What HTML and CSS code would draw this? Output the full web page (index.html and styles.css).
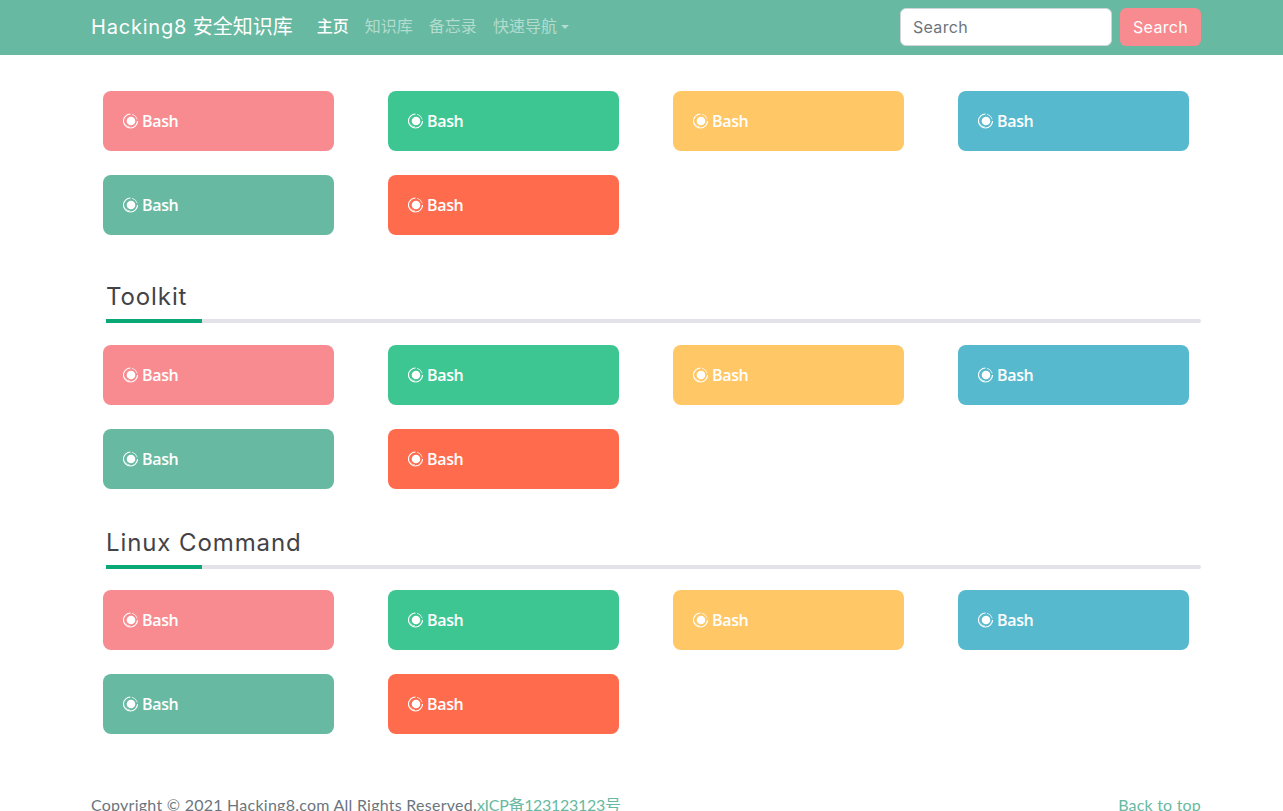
FILE: index.html
```html
<!DOCTYPE html>
<html lang="zh">
<head>
<meta charset="utf-8">
<title>Hacking8 安全知识库</title>
<link rel="stylesheet" href="styles.css">
</head>
<body>
<svg class="sprite" width="0" height="0" aria-hidden="true">
  <symbol id="ring" viewBox="0 0 15 16">
    <path d="M7.5 1a7 7 0 1 0 7 7" fill="none" stroke="currentColor" stroke-width="1.1"/>
    <path d="M14.2 6.4A7 7 0 0 0 9 1.2" fill="none" stroke="currentColor" stroke-width=".7"/>
    <path d="M2.6 11.4A6 6 0 0 0 7 14" fill="none" stroke="currentColor" stroke-width=".6"/>
    <circle cx="8" cy="8" r="4.3" fill="currentColor"/>
  </symbol>
</svg>
<nav class="navbar">
  <div class="nav-inner">
    <a class="brand" href="#"><span class="brand-latin">Hacking8</span> 安全知识库</a>
    <ul class="nav-links">
      <li><a class="nav-link active" href="#">主页</a></li>
      <li><a class="nav-link" href="#">知识库</a></li>
      <li><a class="nav-link" href="#">备忘录</a></li>
      <li><a class="nav-link caret" href="#">快速导航</a></li>
    </ul>
    <form class="search">
      <input class="search-input" type="text" placeholder="Search">
      <button class="search-btn" type="button">Search</button>
    </form>
  </div>
</nav>
<main class="container">
  <section class="cards first">
    <a class="card pink" href="#"><svg class="icon"><use href="#ring"/></svg>Bash</a>
    <a class="card green" href="#"><svg class="icon"><use href="#ring"/></svg>Bash</a>
    <a class="card yellow" href="#"><svg class="icon"><use href="#ring"/></svg>Bash</a>
    <a class="card blue" href="#"><svg class="icon"><use href="#ring"/></svg>Bash</a>
    <a class="card teal" href="#"><svg class="icon"><use href="#ring"/></svg>Bash</a>
    <a class="card orange" href="#"><svg class="icon"><use href="#ring"/></svg>Bash</a>
  </section>
  <header class="section-head toolkit">
    <h2 class="section-title">Toolkit</h2>
    <div class="track"><div class="fill"></div></div>
  </header>
  <section class="cards">
    <a class="card pink" href="#"><svg class="icon"><use href="#ring"/></svg>Bash</a>
    <a class="card green" href="#"><svg class="icon"><use href="#ring"/></svg>Bash</a>
    <a class="card yellow" href="#"><svg class="icon"><use href="#ring"/></svg>Bash</a>
    <a class="card blue" href="#"><svg class="icon"><use href="#ring"/></svg>Bash</a>
    <a class="card teal" href="#"><svg class="icon"><use href="#ring"/></svg>Bash</a>
    <a class="card orange" href="#"><svg class="icon"><use href="#ring"/></svg>Bash</a>
  </section>
  <header class="section-head linux">
    <h2 class="section-title">Linux Command</h2>
    <div class="track"><div class="fill"></div></div>
  </header>
  <section class="cards">
    <a class="card pink" href="#"><svg class="icon"><use href="#ring"/></svg>Bash</a>
    <a class="card green" href="#"><svg class="icon"><use href="#ring"/></svg>Bash</a>
    <a class="card yellow" href="#"><svg class="icon"><use href="#ring"/></svg>Bash</a>
    <a class="card blue" href="#"><svg class="icon"><use href="#ring"/></svg>Bash</a>
    <a class="card teal" href="#"><svg class="icon"><use href="#ring"/></svg>Bash</a>
    <a class="card orange" href="#"><svg class="icon"><use href="#ring"/></svg>Bash</a>
  </section>
  <footer class="footer">
    <p class="copy">Copyright © 2021 Hacking8.com All Rights Reserved.<a class="icp" href="#">xICP备123123123号</a></p>
    <a class="top" href="#">Back to top</a>
  </footer>
</main>
</body>
</html>
```
FILE: styles.css
```css
* { box-sizing: border-box; }
html, body { height: 811px; overflow: hidden; }
body {
  margin: 0;
  background: #fff;
  color: #6c757d;
  font: 16px/24px "Lato", "Noto Sans CJK SC", sans-serif;
}
a { text-decoration: none; }
.sprite { display: block; position: absolute; }

.navbar { height: 55px; background: #67b9a1; }
.nav-inner {
  width: 1110px;
  height: 55px;
  margin-left: 91px;
  display: flex;
  align-items: flex-start;
}
.brand {
  color: #fff;
  font: 20px/30px "Inter", "Noto Sans CJK SC", sans-serif;
  padding-top: 12px;
  margin-right: 16px;
  white-space: nowrap;
}
.brand-latin { letter-spacing: .8px; }
.nav-links { display: flex; margin: 0; padding: 0; list-style: none; }
.nav-link {
  display: block;
  padding: 13px 8px 0;
  font: 16px/24px "Noto Sans CJK SC", sans-serif;
  color: rgba(255, 255, 255, .5);
}
.nav-link.active { color: #fff; font-weight: 500; }
.caret::after {
  content: "";
  display: inline-block;
  margin-left: 4px;
  vertical-align: 3px;
  border-top: 4px solid currentColor;
  border-left: 4px solid transparent;
  border-right: 4px solid transparent;
}
.search { display: flex; gap: 8px; margin: 8px 0 0 auto; }
.search-input {
  width: 212px;
  height: 38px;
  padding: 0 12px;
  border: 1px solid #ced4da;
  border-radius: 6px;
  background: #fff;
  color: #495057;
  font: 16px "Inter", sans-serif;
  letter-spacing: .3px;
  outline: 0;
}
.search-input::placeholder { color: #6c757d; opacity: 1; }
.search-btn {
  width: 81px;
  height: 38px;
  padding: 0;
  border: 0;
  border-radius: 6px;
  background: #f88b90;
  color: #fff;
  font: 16px "Inter", sans-serif;
  letter-spacing: .3px;
}

.container { width: 1110px; margin-left: 91px; }
.cards {
  display: grid;
  grid-template-columns: repeat(4, 231px);
  column-gap: 54px;
  row-gap: 24px;
  padding: 0 12px;
}
.cards.first { padding-top: 36px; }
.card {
  height: 60px;
  display: flex;
  align-items: center;
  gap: 4px;
  padding-left: 20px;
  border-radius: 8px;
  color: #fff;
  font: 600 16px/24px "Open Sans", sans-serif;
  letter-spacing: -.35px;
}
.icon { width: 15px; height: 16px; flex: none; }
.pink { background: #f88b90; }
.green { background: #3ec692; }
.yellow { background: #ffc766; }
.blue { background: #56b9ce; }
.teal { background: #67b9a1; }
.orange { background: #ff6b4d; }

.section-head { padding-left: 15px; margin-bottom: 22px; }
.section-head.toolkit { margin-top: 44px; }
.section-head.linux { margin-top: 36px; margin-bottom: 21px; }
.section-title {
  margin: 0 0 5px;
  height: 35px;
  padding-top: 1px;
  color: #434347;
  font: 400 24px/34px "Inter", sans-serif;
  letter-spacing: .9px;
}
.track { height: 4px; background: #e2e2e8; border-radius: 2px; }
.fill { width: 96px; height: 4px; background: #0aa877; }

.footer {
  display: flex;
  justify-content: space-between;
  margin-top: 59px;
  letter-spacing: .25px;
}
.copy { margin: 0; }
.icp { letter-spacing: -.3px; }
.footer a { color: #67b9a1; }
.top { letter-spacing: .2px; }
```
